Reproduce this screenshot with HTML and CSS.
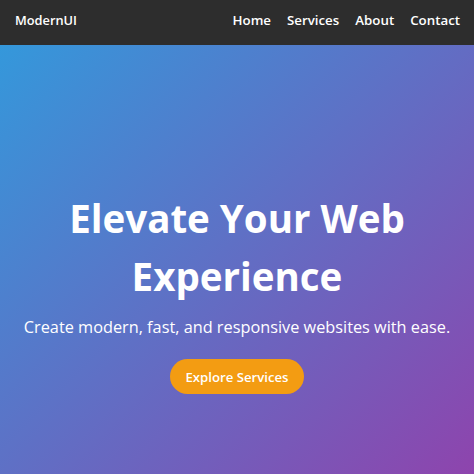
FILE: index.html
```
<!DOCTYPE html>
<html lang="en">
<head>
<meta charset="utf-8">
<title>ModernUI</title>
<link rel="stylesheet" href="styles.css">
</head>
<body>
<header class="topbar">
  <div class="logo">ModernUI</div>
  <nav class="nav">
    <a href="#">Home</a>
    <a href="#">Services</a>
    <a href="#">About</a>
    <a href="#">Contact</a>
  </nav>
</header>
<section class="hero">
  <h1 class="hero-title">Elevate Your Web Experience</h1>
  <p class="hero-sub">Create modern, fast, and responsive websites with ease.</p>
  <a class="hero-btn" href="#">Explore Services</a>
</section>
</body>
</html>
```
FILE: styles.css
```
* { box-sizing: border-box; }
html, body { margin: 0; padding: 0; }
body {
  font-family: "Open Sans", "DejaVu Sans", sans-serif;
  color: #fff;
  overflow: hidden;
}
.topbar {
  height: 45px;
  background: #2d2d2d;
  display: flex;
  align-items: center;
  justify-content: space-between;
  padding: 0 14px 6px 15px;
}
.logo {
  font-size: 12.8px;
  font-weight: 600;
}
.nav {
  display: flex;
  gap: 16px;
}
.nav a {
  color: #fff;
  text-decoration: none;
  font-size: 13.3px;
  font-weight: 600;
}
.hero {
  height: calc(100vh - 45px);
  background: linear-gradient(135deg, #3498db, #8e44ad);
  display: flex;
  flex-direction: column;
  align-items: center;
  padding-top: 144px;
  text-align: center;
}
.hero-title {
  margin: 0;
  font-size: 38.5px;
  font-weight: 700;
  line-height: 58px;
  width: 380px;
}
.hero-sub {
  margin: 10px 0 0;
  font-size: 16.3px;
  line-height: 24px;
}
.hero-btn {
  margin-top: 20px;
  background: #f39c12;
  color: #fff;
  text-decoration: none;
  font-size: 13.2px;
  font-weight: 600;
  height: 35px;
  padding: 0 15px;
  border-radius: 18px;
  display: flex;
  align-items: center;
}
```
